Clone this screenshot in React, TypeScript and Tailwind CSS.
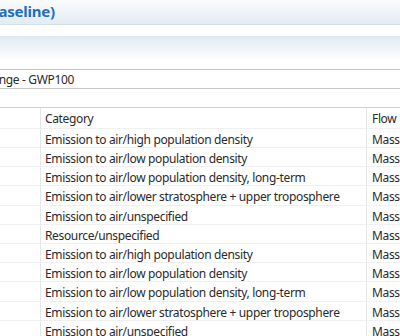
import React from 'react';

const rows: string[] = [
    'Emission to air/high population density',
    'Emission to air/low population density',
    'Emission to air/low population density, long-term',
    'Emission to air/lower stratosphere + upper troposphere',
    'Emission to air/unspecified',
    'Resource/unspecified',
    'Emission to air/high population density',
    'Emission to air/low population density',
    'Emission to air/low population density, long-term',
    'Emission to air/lower stratosphere + upper troposphere',
    'Emission to air/unspecified',
];

const App: React.FC = () => {
    return (
        <div className="w-[400px] h-[336px] overflow-hidden bg-white text-[12px] tracking-[-0.35px] text-[#2a2a2a] font-['Noto_Sans',sans-serif]">
            {/* form title, scrolled off to the left */}
            <div className="h-[25px] border-b border-[#d3e0ec] bg-gradient-to-b from-[#fbfcfd] to-[#e3ebf3] overflow-hidden">
                <div className="w-[55px] flex justify-end pt-[1px]">
                    <span className="text-[15px] font-bold tracking-[-0.2px] text-[#1f6ec0] leading-[20px] whitespace-nowrap">Impact analysis (Baseline)</span>
                </div>
            </div>
            <div className="h-[11px]" />
            {/* section header */}
            <div className="h-[24px] border-t border-[#e1e9f1] bg-gradient-to-b from-[#e1eaf3] to-white" />
            <div className="h-[9px]" />
            {/* method field */}
            <div className="h-[20px] border-y border-[#c6c6c6] flex items-center">
                <div className="w-[74px] flex justify-end pt-[1px]">
                    <span className="whitespace-nowrap">Land use change - GWP100</span>
                </div>
            </div>
            <div className="h-[19px] border-b border-[#d0d0d0]" />
            {/* table */}
            <div className="flex flex-col">
                <div className="flex h-[21px] border-b border-[#f0f0f0]">
                    <div className="w-[41px] border-r border-[#e6e6e6]" />
                    <div className="w-[326px] border-r border-[#e6e6e6] pl-[4px] pt-[2px] flex items-center whitespace-nowrap">Category</div>
                    <div className="flex-1 pl-[5px] pt-[2px] flex items-center">Flow</div>
                </div>
                {rows.map((cat, i) => (
                    <div key={i} className={(i % 5 === 3 ? 'h-[20px]' : 'h-[19px]') + ' flex border-b border-[#f0f0f0]'}>
                        <div className="w-[41px] border-r border-[#e6e6e6]" />
                        <div className="w-[326px] border-r border-[#e6e6e6] pl-[4px] pt-[3px] flex items-center whitespace-nowrap overflow-hidden">{cat}</div>
                        <div className="flex-1 pl-[5px] pt-[3px] flex items-center whitespace-nowrap">Mass</div>
                    </div>
                ))}
            </div>
        </div>
    );
};

export default App;
